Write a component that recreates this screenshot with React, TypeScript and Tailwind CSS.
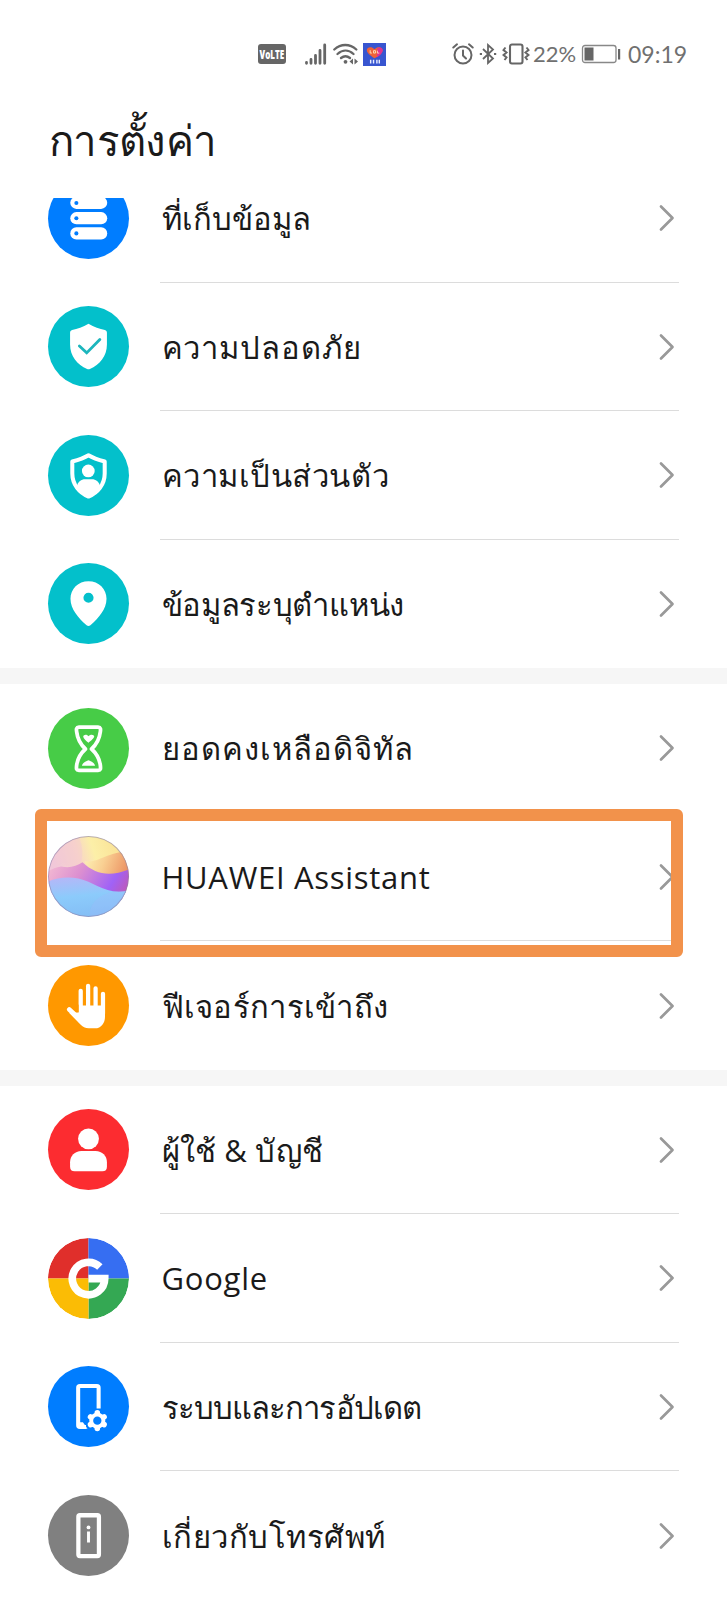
import type { ReactNode } from 'react';

type Item = {
  label: string;
  color: string;
  text: string;
  icon: ReactNode;
  highlighted?: boolean;
};

function StorageIcon() {
  return (
    <svg viewBox="0 0 80 80" className="h-full w-full">
      <g fill="#fff">
        <rect x="22" y="18.5" width="36.5" height="12" rx="6" />
        <rect x="22" y="33.7" width="36.5" height="12" rx="6" />
        <rect x="22" y="48.7" width="36.5" height="12" rx="6" />
      </g>
      <g fill="#007dff">
        <circle cx="28" cy="24.6" r="2" />
        <circle cx="28" cy="39.7" r="2" />
        <circle cx="28" cy="54.7" r="2" />
      </g>
    </svg>
  );
}

function SecurityIcon() {
  return (
    <svg viewBox="0 0 80 80" className="h-full w-full">
      <path d="M40 17.5c5.500 3.300 11 5 16.200 6.300 1.300.4 2 1.200 2 2.500V38c0 11.500-7.200 20-16.800 24.200q-1.400.6-2.800 0C29 58 21.800 49.500 21.800 38V26.300c0-1.300.7-2.100 2-2.500C29 22.500 34.500 20.800 40 17.500z" fill="#fff" />
      <path d="M31 39.500l7.200 6.800L51.200 33" fill="none" stroke="#1cb6bd" strokeWidth="2.800" strokeLinecap="round" />
    </svg>
  );
}

function PrivacyIcon() {
  return (
    <svg viewBox="0 0 80 80" className="h-full w-full">
      <path d="M40 20c5.500 3.300 10.500 4.700 16 6.200V38c0 11-7 19-16 22.800C31 57 24 49 24 38V26.200C29.500 24.700 34.500 23.300 40 20z" fill="none" stroke="#fff" strokeWidth="4" strokeLinejoin="round" />
      <circle cx="39.800" cy="35.500" r="6.300" fill="#fff" />
      <path d="M28.500 51c1-5 4.500-7.300 8-7.300h7c3.500 0 7 2.300 8 7.300C48.500 56 44.500 59 40 61c-4.500-2-8.500-5-11.500-10z" fill="#fff" />
    </svg>
  );
}

function LocationIcon() {
  return (
    <svg viewBox="0 0 80 80" className="h-full w-full">
      <path fillRule="evenodd" d="M40 18c10.200 0 17.800 7.600 17.800 17.300 0 10.200-7.600 18.700-15.900 26.200q-1.900 1.600-3.800 0C29.800 54 22.200 45.500 22.200 35.300 22.200 25.600 29.800 18 40 18zm0 11.300a5 5 0 1 0 0 10 5 5 0 0 0 0-10z" fill="#fff" />
    </svg>
  );
}

function HourglassIcon() {
  return (
    <svg viewBox="0 0 80 80" className="h-full w-full">
      <path d="M30.500 19h19c2.600 0 2.600 2 2.200 4.500C50.800 31 48 36 43 40.500 48 45 50.800 50 51.700 56.500c.4 3.500.4 5-2.200 5h-19c-2.600 0-2.600-1.500-2.200-5C29.200 50 32 45 37 40.500 32 36 29.200 31 28.300 23.500c-.4-2.500-.4-4.500 2.200-4.500z" fill="none" stroke="#fff" strokeWidth="3.700" strokeLinejoin="round" />
      <path d="M35 27.500c2-1.800 3.500-1 5 .3 1.500-1.300 3.500-2.100 5.500-.3.800 1.500-2.500 4.700-5.500 6.700-3-2-6-5.200-5-6.700zM33.500 57c1-3 3.500-4.500 6.500-5.500 3 1 5.500 2.500 6.500 5.500z" fill="#fff" />
    </svg>
  );
}

function AssistantIcon() {
  return (
    <svg viewBox="0 0 80 80" className="h-full w-full">
      <defs>
        <clipPath id="orb"><circle cx="40" cy="40" r="40" /></clipPath>
        <linearGradient id="orbTop" x1="0" y1="0.300" x2="1" y2="0">
          <stop offset="0" stopColor="#efc6de" />
          <stop offset="0.350" stopColor="#f8d5c8" />
          <stop offset="0.550" stopColor="#fcefa8" />
          <stop offset="1" stopColor="#f9dc8c" />
        </linearGradient>
        <linearGradient id="orbOrange" x1="0" y1="0.300" x2="1" y2="0.500">
          <stop offset="0" stopColor="#fcf0b4" />
          <stop offset="0.450" stopColor="#f9cf92" />
          <stop offset="1" stopColor="#ec9464" />
        </linearGradient>
        <linearGradient id="orbPurple" x1="0" y1="0.300" x2="1" y2="0.600">
          <stop offset="0" stopColor="#f0b4d2" />
          <stop offset="0.350" stopColor="#dc8fd0" />
          <stop offset="0.780" stopColor="#a062f6" />
          <stop offset="1" stopColor="#bf58b8" />
        </linearGradient>
        <linearGradient id="orbBlue" x1="0.300" y1="0" x2="0.500" y2="1">
          <stop offset="0" stopColor="#b3b8f8" />
          <stop offset="0.450" stopColor="#8ccbfb" />
          <stop offset="1" stopColor="#83bdf5" />
        </linearGradient>
      </defs>
      <g clipPath="url(#orb)">
        <rect width="80" height="80" fill="url(#orbTop)" />
        <path d="M30 0c5 10 5 22 1 31-7 1-12-1-17-5L0 40V0z" fill="#f3c8d4" fillOpacity="0.400" />
        <path d="M36 25c13 2 22-9 44-10v24H50C43 36 39 31 36 25z" fill="url(#orbOrange)" />
        <path d="M0 35c4-3 8-4 13-5 8 2 15 0 21-4 14 13 28 14 46 7v34H0z" fill="url(#orbPurple)" />
        <path d="M0 45c9-4 20-5 30-3 14 3 24 13 40 13 4 0 8-1 10-2v28H0z" fill="url(#orbBlue)" />
        <path d="M42 80c-3-12 8-24 28-26h10v26z" fill="#a3b8fb" fillOpacity="0.250" />
      </g>
      <circle cx="40" cy="40" r="39.500" fill="none" stroke="#8d86a8" strokeOpacity="0.600" />
    </svg>
  );
}

function HandIcon() {
  return (
    <svg viewBox="0 0 80 80" className="h-full w-full">
      <g fill="none" stroke="#fff" strokeWidth="4.200" strokeLinecap="round">
        <path d="M32.300 25.500v22M39.600 20.500V45M47 23v22M54.300 28.500V48" />
        <path d="M21 44l12 11" strokeWidth="4.600" />
      </g>
      <path d="M30.300 47l2.200-7h23.800v11c0 6-3.500 11.500-10 11.500h-6c-3.500 0-6-1.500-8.500-4L21 47.500z" fill="#fff" />
      <path d="M26.500 43.500l3.700 3.300v-8z" fill="#ff9800" />
    </svg>
  );
}

function UserIcon() {
  return (
    <svg viewBox="0 0 80 80" className="h-full w-full">
      <circle cx="40" cy="29.500" r="10.300" fill="#fff" />
      <path d="M33 41.500h14c6.600 0 11.200 5 11.200 11V57c0 3-1.500 4.500-4.500 4.500H26.300c-3 0-4.500-1.500-4.500-4.500v-4.500c0-6 4.600-11 11.200-11z" fill="#fff" />
    </svg>
  );
}

function GoogleIcon() {
  return (
    <svg viewBox="0 0 80 80" className="h-full w-full">
      <path d="M40 40V0A40 40 0 0 0 0 40z" fill="#e02f2b" />
      <path d="M40 40h40A40 40 0 0 0 40 0z" fill="#366ef2" />
      <path d="M40 40v40a40 40 0 0 0 40-40z" fill="#34a853" />
      <path d="M40 40H0a40 40 0 0 0 40 40z" fill="#fbbc05" />
      <path d="M51.200 28.600A16 16 0 1 0 56 40.200H40" fill="none" stroke="#fff" strokeWidth="7.600" />
    </svg>
  );
}

function SystemIcon() {
  return (
    <svg viewBox="0 0 80 80" className="h-full w-full">
      <path d="M50 42V21.500q0-1.700-1.700-1.700H31.500q-1.700 0-1.700 1.700v37q0 1.700 1.700 1.700h6" fill="none" stroke="#fff" strokeWidth="4" />
      <path d="M30 55.500h4.500l4.500 6.500h-7z" fill="#fff" />
      <g stroke="#fff" strokeWidth="5.500" strokeLinecap="round">
        <path d="M48.700 46.300v15.400M42 50.200l13.400 7.600M42 57.800l13.400-7.600" />
      </g>
      <circle cx="48.700" cy="54" r="7.900" fill="#fff" />
      <circle cx="48.700" cy="54" r="4.100" fill="#007dff" />
    </svg>
  );
}

function AboutIcon() {
  return (
    <svg viewBox="0 0 80 80" className="h-full w-full">
      <rect x="30" y="20" width="20.300" height="40.300" rx="1.500" fill="none" stroke="#fff" strokeWidth="4.200" />
      <circle cx="40" cy="32" r="1.900" fill="#fff" />
      <path d="M40 36v10.800" stroke="#fff" strokeWidth="2.900" />
    </svg>
  );
}

const groups: Item[][] = [
  [
    { label: 'ที่เก็บข้อมูล', color: 'bg-[#007dff]', text: 'tracking-normal', icon: <StorageIcon /> },
    { label: 'ความปลอดภัย', color: 'bg-[#03c0cb]', text: 'tracking-[0.9px]', icon: <SecurityIcon /> },
    { label: 'ความเป็นส่วนตัว', color: 'bg-[#03c0cb]', text: 'tracking-[0.55px]', icon: <PrivacyIcon /> },
    { label: 'ข้อมูลระบุตำแหน่ง', color: 'bg-[#03c0cb]', text: 'tracking-[-0.3px]', icon: <LocationIcon /> },
  ],
  [
    { label: 'ยอดคงเหลือดิจิทัล', color: 'bg-[#47cc47]', text: 'tracking-[1px]', icon: <HourglassIcon /> },
    { label: 'HUAWEI Assistant', color: 'bg-[#c9c4ee]', text: 'tracking-[0.7px]', icon: <AssistantIcon />, highlighted: true },
    { label: 'ฟีเจอร์การเข้าถึง', color: 'bg-[#ff9800]', text: 'tracking-[0.3px]', icon: <HandIcon /> },
  ],
  [
    { label: 'ผู้ใช้ & บัญชี', color: 'bg-[#fc2c30]', text: 'tracking-[0.2px]', icon: <UserIcon /> },
    { label: 'Google', color: 'bg-white', text: 'tracking-[0.75px]', icon: <GoogleIcon /> },
    { label: 'ระบบและการอัปเดต', color: 'bg-[#007dff]', text: 'tracking-[-0.9px]', icon: <SystemIcon /> },
    { label: 'เกี่ยวกับโทรศัพท์', color: 'bg-[#808080]', text: 'tracking-[0.5px]', icon: <AboutIcon /> },
  ],
];

function StatusBar() {
  return (
    <div className="flex h-[108px] items-center pl-[258px] text-[#666]">
      <div className="flex h-5 w-[28px] items-center justify-center rounded-[3px] bg-[#666]">
        <span className="scale-x-[0.62] text-[13px] font-extrabold leading-none text-white">VoLTE</span>
      </div>
      <svg viewBox="0 0 22 22" className="ml-[19px] h-[22px] w-[22px]" stroke="currentColor" strokeWidth="2.800" strokeLinecap="round">
        <path d="M1.500 19.500v.8M6 16.500v3.800M10.500 12.500v7.800M15 7.500v12.800M19.700 2v18.300" />
      </svg>
      <svg viewBox="0 0 25 22" className="ml-[6px] h-[22px] w-[25px]" fill="none" stroke="currentColor" strokeWidth="2.300" strokeLinecap="round">
        <path d="M1.300 6.500c6.500-6 15.500-6 22 0M4.500 11c5-4.500 11-4.500 16 0M8 15c3-2.400 6-2.400 9 0" />
        <circle cx="12.500" cy="18.800" r="1.900" fill="currentColor" stroke="none" />
        <path d="M20 15.500l-3.500 3 3.500 3zM21.500 15.500l3.500 3-3.500 3z" fill="currentColor" stroke="none" />
      </svg>
      <svg viewBox="0 0 24 24" className="ml-[5px] h-[23px] w-[23px]">
        <rect width="24" height="24" fill="#3855d0" />
        <path d="M12 16C7 12.500 4 10 4 7.500 4 4 9 3 12 6.500 15 3 20.500 4 20.500 7.500c0 3-4.500 6.500-8.500 8.500z" fill="#ee6138" />
        <path d="M15 5.500C17 4 20.500 4.500 20.500 7.500c0 3-3 5.500-6 7.300z" fill="#de3193" />
        <path d="M7.500 7.500v3h1.800M11 8v2.500h2V8zM15 8v2.500h2" fill="none" stroke="#ffe9c4" strokeWidth="0.900" />
        <path d="M8 17.500v4M11 17.500v4M14.500 17.500v4M17 17.500v4" stroke="#e8edff" strokeWidth="1.500" />
      </svg>
      <svg viewBox="0 0 22 22" className="ml-[66px] h-[22px] w-[22px]" fill="none" stroke="currentColor" strokeWidth="2" strokeLinecap="round">
        <circle cx="11" cy="12" r="8.500" />
        <path d="M11 7.500v5l3 3M1.300 4.500L5 1.300M20.700 4.500L17 1.300" />
      </svg>
      <svg viewBox="0 0 18 22" className="ml-[5px] h-[22px] w-[18px]" fill="none" stroke="currentColor" strokeWidth="1.800">
        <path d="M4 6l10 9.500-5 4.500V2l5 4.500L4 16" />
        <path d="M.8 11h2.200M15 11h2.200" />
      </svg>
      <svg viewBox="0 0 28 22" className="ml-[5px] h-[22px] w-[28px]" fill="none" stroke="currentColor">
        <rect x="8" y="1.500" width="12.500" height="19" rx="2" strokeWidth="2.100" />
        <path d="M3.500 4.500L1.500 7l3 2.500-3 2.500 3 2.500-2 2.500M24.500 4.500l2 2.500-3 2.500 3 2.500-3 2.500 2 2.500" strokeWidth="2" />
      </svg>
      <span className="ml-[3px] w-[43px] font-[Lato,sans-serif] text-[22px] leading-none text-[#707070]">22%</span>
      <svg viewBox="0 0 40 20" className="ml-[5px] h-5 w-10 shrink-0">
        <rect x="1.500" y="1.500" width="33.500" height="17" rx="2.500" fill="none" stroke="#888" strokeWidth="1.300" />
        <rect x="3.500" y="3.500" width="9" height="13" fill="#666" />
        <rect x="37" y="5" width="2.200" height="10.500" fill="#666" />
      </svg>
      <span className="ml-[7px] font-[Lato,sans-serif] text-[23px] leading-none text-[#707070]">09:19</span>
    </div>
  );
}

function Row({ item, last }: { item: Item; last: boolean }) {
  return (
    <div className="relative flex h-[128.5px] pl-12 pr-12">
      <div className={`mt-[23.5px] h-[81px] w-[81px] shrink-0 overflow-hidden rounded-full ${item.color}`}>
        {item.icon}
      </div>
      <div className={`ml-[31px] flex flex-1 items-center justify-between pt-px ${last ? '' : 'border-b border-[#dcdcdc]'}`}>
        <span className={`ml-[1.5px] whitespace-nowrap text-[31px] text-[#1a1a1a] ${item.text}`}>{item.label}</span>
        <svg viewBox="0 0 16 28" className="mr-[4px] h-7 w-4 shrink-0" fill="none" stroke="#999" strokeWidth="2.700" strokeLinecap="round" strokeLinejoin="round">
          <path d="M2 2.500L13.500 14 2 25.500" />
        </svg>
      </div>
      {item.highlighted && (
        <div className="pointer-events-none absolute -top-[4px] left-[35px] h-[148px] w-[648px] rounded-[6px] border-[12px] border-[#f2924b]" />
      )}
    </div>
  );
}

export default function App() {
  return (
    <div className="h-[1600px] w-[727px] overflow-hidden bg-white font-['Open_Sans','Noto_Sans',sans-serif]">
      <StatusBar />
      <div className="h-[90px] pl-[49px] pt-[11px]">
        <h1 className="text-[42px] leading-none tracking-[-0.7px] text-[#1a1a1a]">การตั้งค่า</h1>
      </div>
      <div className="h-[1402px] overflow-hidden">
        <div className="-mt-11 flex flex-col gap-4 bg-[#f6f6f6]">
          {groups.map((items, i) => (
            <div key={i} className="bg-white">
              {items.map((item, j) => (
                <Row key={item.label} item={item} last={j === items.length - 1} />
              ))}
            </div>
          ))}
        </div>
      </div>
    </div>
  );
}
